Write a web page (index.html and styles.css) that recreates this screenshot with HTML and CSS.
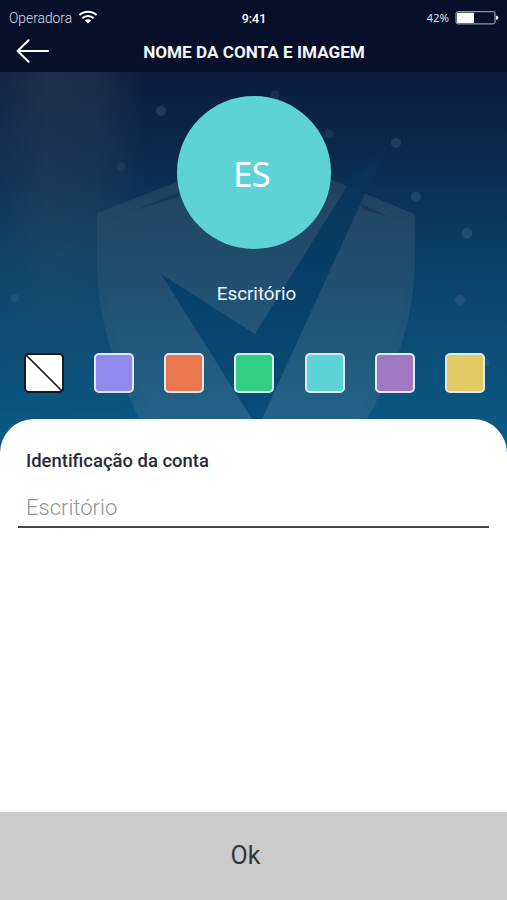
FILE: index.html
```html
<!DOCTYPE html>
<html lang="pt-BR">
<head>
<meta charset="utf-8">
<meta name="viewport" content="width=device-width, initial-scale=1">
<title>Nome da conta e imagem</title>
<link rel="stylesheet" href="styles.css">
</head>
<body>
<div class="screen">
  <header class="header">
    <div class="status">
      <div class="carrier">
        <span>Operadora</span>
        <svg class="wifi" viewBox="0 0 20 14" aria-hidden="true">
          <path d="M1.4 5.1C6.2.6 13.8.6 18.6 5.1M4.3 8.2c3.2-3.1 8.2-3.1 11.4 0" fill="none" stroke="#fff" stroke-width="2"/>
          <path d="M6.8 10.4c1.8-1.7 4.6-1.7 6.4 0L10 13.6z" fill="#fff"/>
        </svg>
      </div>
      <span class="clock">9:41</span>
      <div class="power">
        <span>42%</span>
        <svg class="battery" viewBox="0 0 44 14" aria-hidden="true">
          <rect x="1" y=".7" width="39" height="12.2" rx="1.8" fill="none" stroke="#b4b8c8" stroke-width="1"/>
          <rect x="2" y="1.7" width="17" height="10.2" rx=".5" fill="#fff"/>
          <path d="M41 4.8c3.2.4 3.2 3.600 0 4z" fill="#fff"/>
        </svg>
      </div>
    </div>
    <nav class="nav">
      <svg class="back" viewBox="0 0 34 24" aria-hidden="true">
        <path d="M13.500 1.200 2.600 12l11 10.800M2.600 12H33" fill="none" stroke="#fff" stroke-width="2" stroke-linecap="round" stroke-linejoin="round"/>
      </svg>
      <h1 class="title">NOME DA CONTA E IMAGEM</h1>
    </nav>
  </header>

  <section class="hero">
    <svg class="backdrop" viewBox="0 72 507 380" aria-hidden="true">
      <defs>
        <linearGradient id="sky" x1="0" y1="0" x2="0" y2="1">
          <stop offset="0" stop-color="#0b1d3e"/>
          <stop offset=".25" stop-color="#0b2c51"/>
          <stop offset=".5" stop-color="#0b4166"/>
          <stop offset=".75" stop-color="#0c4f78"/>
          <stop offset="1" stop-color="#0b5c88"/>
        </linearGradient>
        <linearGradient id="beam" x1="0" y1="0" x2="1" y2="0">
          <stop offset="0" stop-color="#55606e" stop-opacity=".1"/>
          <stop offset=".35" stop-color="#55606e" stop-opacity=".26"/>
          <stop offset=".65" stop-color="#55606e" stop-opacity=".22"/>
          <stop offset="1" stop-color="#55606e" stop-opacity="0"/>
        </linearGradient>
        <linearGradient id="fade" x1="0" y1="0" x2="0" y2="1">
          <stop offset="0" stop-color="#fff"/>
          <stop offset=".45" stop-color="#fff" stop-opacity=".75"/>
          <stop offset=".9" stop-color="#fff" stop-opacity="0"/>
        </linearGradient>
        <linearGradient id="shield" gradientUnits="userSpaceOnUse" x1="0" y1="150" x2="0" y2="420">
          <stop offset="0" stop-color="#24415f"/>
          <stop offset=".5" stop-color="#255171"/>
          <stop offset="1" stop-color="#246488"/>
        </linearGradient>
        <linearGradient id="tick" gradientUnits="userSpaceOnUse" x1="0" y1="140" x2="0" y2="420">
          <stop offset="0" stop-color="#0b2b50" stop-opacity="0"/>
          <stop offset=".1" stop-color="#0a3157" stop-opacity=".8"/>
          <stop offset=".4" stop-color="#083d63"/>
          <stop offset="1" stop-color="#074e7a"/>
        </linearGradient>
        <mask id="beam-mask"><rect y="72" width="507" height="380" fill="url(#fade)"/></mask>
      </defs>
      <rect y="72" width="507" height="380" fill="url(#sky)"/>
      <rect x="-8" y="72" width="155" height="380" fill="url(#beam)" mask="url(#beam-mask)"/>
      <path d="M97 213 177 182Q220 165 253 148 300 170 330 179L366 194 412 213Q416 215 415 222V262C413 325 396 370 364 424H142C112 363 97 315 97 262z" fill="url(#shield)" opacity=".8"/>
      <path d="M104 224 140 210 179 195Q220 180 253 163 300 182 362 204L408 222V262C407 318 385 376 352 424H161C124 370 104 315 104 262z" fill="url(#shield)" opacity=".5"/>
      <path d="M138 209 179 192 179 197z M360 203 389 217 364 210z" fill="#173454" opacity=".8"/>
      <path d="M161 274 255 334 349 183 392 140Q376 168 365 194L262 419H252z" fill="url(#tick)"/>
      <g fill="#63809d" opacity=".24">
        <circle cx="161" cy="111" r="5"/>
        <circle cx="121" cy="167" r="4.500" opacity=".6"/>
        <circle cx="275" cy="95" r="4.500" opacity=".7"/>
        <circle cx="329" cy="134" r="4.500" opacity=".7"/>
        <circle cx="396" cy="143" r="5"/>
        <circle cx="416" cy="197" r="5"/>
        <circle cx="467" cy="233" r="5.500"/>
        <circle cx="460" cy="300" r="5"/>
        <circle cx="15" cy="298" r="4" opacity=".7"/>
        <circle cx="486" cy="363" r="4" opacity=".7"/>
      </g>
    </svg>
    <div class="avatar">ES</div>
    <p class="account">Escritório</p>
    <div class="swatches">
      <span class="swatch none"><svg viewBox="0 0 40 40" aria-hidden="true"><path d="M2 2 38 38" stroke="#16191d" stroke-width="1.700"/></svg></span>
      <span class="swatch violet"></span>
      <span class="swatch orange"></span>
      <span class="swatch green"></span>
      <span class="swatch teal"></span>
      <span class="swatch purple"></span>
      <span class="swatch yellow"></span>
    </div>
  </section>

  <main class="sheet">
    <div class="label">Identificação da conta</div>
    <div class="field"><span>Escritório</span></div>
  </main>
  <footer class="confirm"><span>Ok</span></footer>
</div>
</body>
</html>
```
FILE: styles.css
```css
* { box-sizing: border-box; }
body { margin: 0; font-family: Roboto, "Liberation Sans", sans-serif; }
h1, p { margin: 0; }
svg { display: block; }

.screen { display: flex; flex-direction: column; width: 507px; height: 900px; overflow: hidden; background: #fff; }

.header { height: 72px; background: #080f2b; color: #fff; }
.status { display: grid; grid-template-columns: 1fr auto 1fr; align-items: center; height: 36px; padding: 0 8px 0 9px; }
.carrier { display: flex; align-items: center; gap: 6px; font-size: 13.8px; font-weight: 300; color: #dcdfe9; }
.wifi { width: 20px; height: 14px; margin-top: -2px; }
.clock { font-size: 12.5px; font-weight: 500; }
.power { display: flex; align-items: center; justify-content: flex-end; gap: 6px; font: 11.500px "Noto Sans", sans-serif; letter-spacing: -.1px; color: #dcdfe9; }
.power span { margin-top: -1px; }
.battery { width: 44px; height: 14px; }
.nav { display: grid; grid-template-columns: 34px 1fr 34px; align-items: center; height: 32px; padding: 0 14px 0 15px; }
.back { width: 34px; height: 24px; margin-top: -2px; }
.title { font-size: 17.150px; line-height: 32px; font-weight: 700; text-align: center; color: #f4f5fa; }

.hero { position: relative; display: flex; flex-direction: column; align-items: center; height: 347px; padding-top: 24px; }
.backdrop { position: absolute; top: 0; left: 0; width: 507px; height: 380px; }
.avatar { position: relative; display: flex; align-items: center; justify-content: center; width: 154px; height: 153px; padding: 1px 4px 0 0; border-radius: 50%; background: #5ed3d7; color: #fff; font: 400 35px "Noto Sans", "Open Sans", sans-serif; letter-spacing: -.8px; }
.account { position: relative; margin: 33px 0 0 6px; font-size: 18.800px; line-height: 24px; color: #eef4f8; }
.swatches { position: relative; display: flex; justify-content: space-between; width: 461px; margin-top: 47px; margin-left: 2px; }
.swatch { width: 40px; height: 40px; border: 2px solid #dfe8f5; border-radius: 5px; }
.none { border-color: #16191d; background: #fff; }
.none svg { width: 40px; height: 40px; margin: -2px; }
.violet { background: #9289ef; }
.orange { background: #eb774f; }
.green { background: #31cf84; }
.teal { background: #5dd3d5; }
.purple { background: #9f78bf; }
.yellow { background: #e2ca62; }

.sheet { position: relative; flex: 1; padding: 30px 18px 0; border-radius: 34px 34px 0 0; background: #fff; }
.label { padding-left: 8px; font-size: 18.450px; line-height: 24px; font-weight: 500; color: #292b36; }
.field { display: flex; align-items: center; height: 55px; padding: 16px 8px 0; border-bottom: 2px solid #47444d; font-size: 22px; font-weight: 300; color: #92949a; }
.confirm { display: flex; align-items: center; justify-content: center; height: 88px; padding: 0 16px 2px 0; background: #cbcbcb; font-size: 25px; color: #35363d; }
```
